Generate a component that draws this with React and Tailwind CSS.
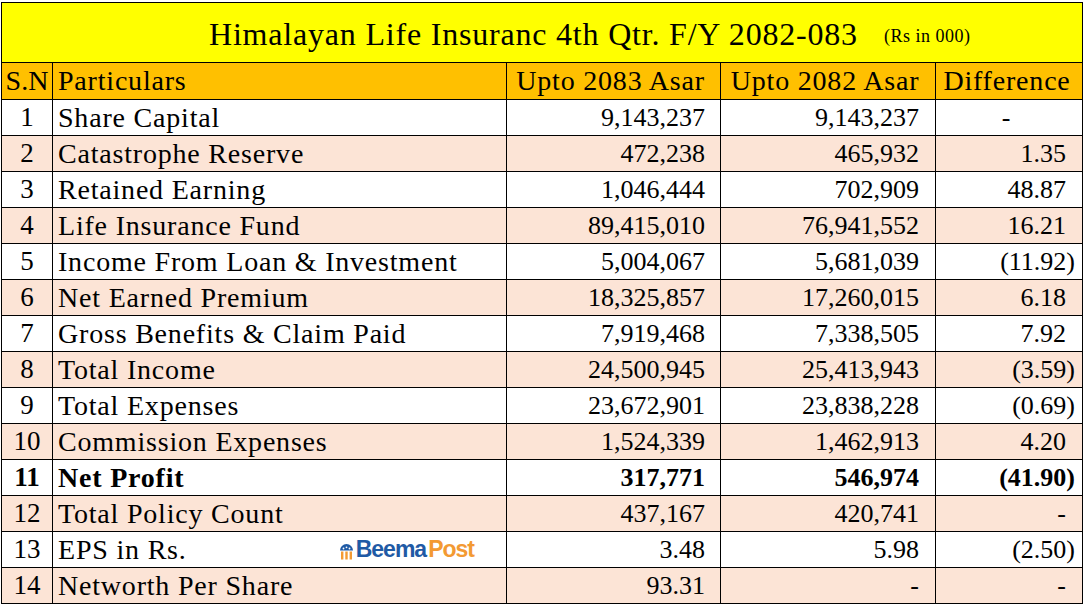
import React from 'react';

const rows = [
  ['1', 'Share Capital', '9,143,237', '9,143,237', '-'],
  ['2', 'Catastrophe Reserve', '472,238', '465,932', '1.35'],
  ['3', 'Retained Earning', '1,046,444', '702,909', '48.87'],
  ['4', 'Life Insurance Fund', '89,415,010', '76,941,552', '16.21'],
  ['5', 'Income From Loan & Investment', '5,004,067', '5,681,039', '(11.92)'],
  ['6', 'Net Earned Premium', '18,325,857', '17,260,015', '6.18'],
  ['7', 'Gross Benefits & Claim Paid', '7,919,468', '7,338,505', '7.92'],
  ['8', 'Total Income', '24,500,945', '25,413,943', '(3.59)'],
  ['9', 'Total Expenses', '23,672,901', '23,838,228', '(0.69)'],
  ['10', 'Commission Expenses', '1,524,339', '1,462,913', '4.20'],
  ['11', 'Net Profit', '317,771', '546,974', '(41.90)'],
  ['12', 'Total Policy Count', '437,167', '420,741', '-'],
  ['13', 'EPS in Rs.', '3.48', '5.98', '(2.50)'],
  ['14', 'Networth Per Share', '93.31', '-', '-'],
];

const serif = { fontFamily: '"Liberation Serif", "DejaVu Serif", serif' };

// small temple/umbrella mark used by the watermark
const BeemaMark = () => (
  <svg width="15" height="19" viewBox="0 0 15 18">
    <path d="M1 8 A6.5 6.5 0 0 1 14 8 Z" fill="#1f5aa5" />
    <circle cx="4.5" cy="6" r="0.9" fill="#fff" />
    <circle cx="7.5" cy="4.8" r="0.9" fill="#fff" />
    <circle cx="10.5" cy="6" r="0.9" fill="#fff" />
    <rect x="2" y="9" width="2.4" height="8" fill="#f39a33" />
    <rect x="6.3" y="9" width="2.4" height="8" fill="#f39a33" />
    <rect x="10.6" y="9" width="2.4" height="8" fill="#f39a33" />
  </svg>
);

const BeemaPost = () => (
  <div className="flex items-end gap-[2px] leading-none">
    <BeemaMark />
    <span
      className="text-[23px] font-bold tracking-[-1px]"
      style={{ fontFamily: '"Liberation Sans Narrow", "Liberation Sans", sans-serif' }}
    >
      <span className="text-[#1f5aa5]">Beema</span>
      <span className="text-[#f39a33] ml-[2px]">Post</span>
    </span>
  </div>
);

const cols = 'grid grid-cols-[51px_454px_214px_215px_147px]';
const cell = 'border-r border-b border-black flex items-center overflow-hidden';

export default function App() {
  return (
    <div className="w-[1084px] h-[604px] bg-white pt-[2px] pl-[1px] text-black" style={serif}>
      <div className="w-[1082px] border-l border-t border-black">
        {/* title */}
        <div className="h-[60px] bg-[#ffff00] border-r border-b border-black flex items-center pl-[207px] pt-[2px] leading-none">
          <span className="text-[32px] tracking-[0.8px]">Himalayan Life Insuranc 4th Qtr. F/Y 2082-083</span>
          <span className="text-[18px] ml-[26px] mt-[4px] tracking-[0.5px]">(Rs in 000)</span>
        </div>

        {/* header */}
        <div className={`${cols} h-[37px] bg-[#ffc000] text-[28px] tracking-[0.8px] leading-none`}>
          <div className={`${cell} justify-center tracking-normal`}>S.N</div>
          <div className={`${cell} pl-[5px]`}>Particulars</div>
          <div className={`${cell} justify-center pr-[6px]`}>Upto 2083 Asar</div>
          <div className={`${cell} justify-center pr-[6px]`}>Upto 2082 Asar</div>
          <div className={`${cell} justify-center pr-[4px]`}>Difference</div>
        </div>

        {rows.map((r, i) => {
          const bold = r[0] === '11';
          const bg = i % 2 === 1 ? 'bg-[#fce4d6]' : 'bg-white';
          const diffPad = r[4].startsWith('(') ? 'pr-[7px]' : 'pr-[16px]';
          return (
            <div key={r[0]} className={`${cols} h-[36px] leading-none ${bg} ${bold ? 'font-bold' : ''}`}>
              <div className={`${cell} justify-center text-[27px]`}>{r[0]}</div>
              <div className={`${cell} justify-between pl-[5px] pr-[32px] text-[28px] tracking-[0.8px]`}>
                <span>{r[1]}</span>
                {r[0] === '13' && <BeemaPost />}
              </div>
              <div className={`${cell} justify-end pr-[15px] text-[26px]`}>{r[2]}</div>
              <div className={`${cell} justify-end pr-[16px] text-[26px]`}>{r[3]}</div>
              <div className={`${cell} text-[26px] ${r[0] === '1' ? 'justify-center pr-[6px]' : `justify-end ${diffPad}`}`}>
                {r[4]}
              </div>
            </div>
          );
        })}
      </div>
    </div>
  );
}
